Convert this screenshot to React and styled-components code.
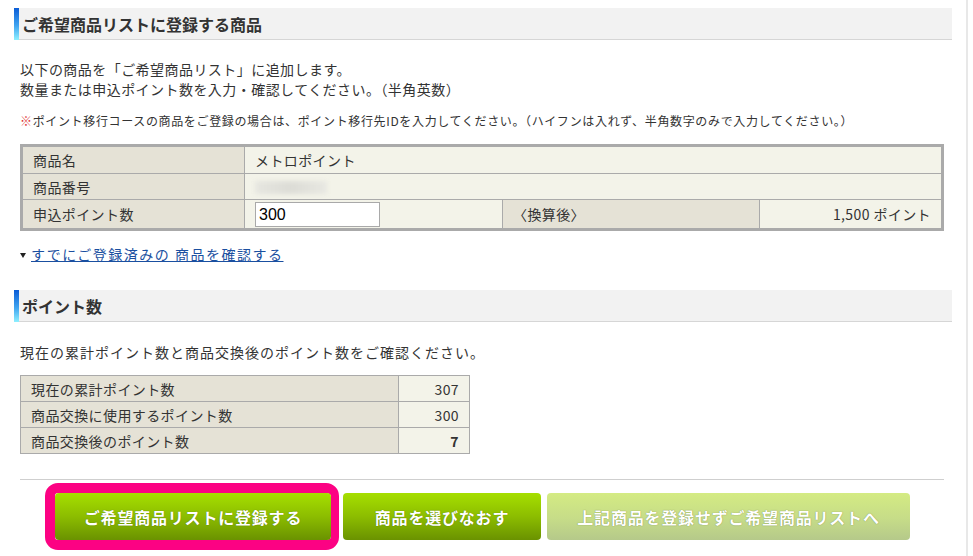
import styled, { createGlobalStyle } from "styled-components";

const GlobalStyle = createGlobalStyle`
  html, body {
    margin: 0;
    padding: 0;
    background: #fff;
  }
  body {
    font-family: "Noto Sans CJK JP", "Noto Sans", sans-serif;
    color: #333;
    font-size: 14px;
  }
`;

const Page = styled.div`
  width: 952px;
  min-height: 556px;
  padding: 8px 0 0 14px;
  box-sizing: content-box;
  border-right: 2px solid #e8e8e8;
  overflow: hidden;
`;

const SectionHeader = styled.h2`
  margin: 0;
  width: 938px;
  height: 32px;
  display: flex;
  align-items: center;
  background: #f2f2f2;
  border-bottom: 1px solid #d6d6d6;
  font-size: 16px;
  font-weight: bold;
  color: #333;
  position: relative;
  padding-left: 8px;
  box-sizing: border-box;

  &::before {
    content: "";
    position: absolute;
    left: 0;
    top: 0;
    width: 5px;
    height: 32px;
    background: linear-gradient(to bottom, #0a5cd6 0%, #3fa4f0 55%, #8ff0ff 100%);
  }
`;

const Content = styled.div`
  margin-left: 6px;
  width: 924px;
`;

const Intro = styled.p`
  margin: 20px 0 0;
  font-size: 14px;
  line-height: 19.5px;
  letter-spacing: 0.45px;
`;

const Note = styled.p`
  margin: 13px 0 0;
  font-size: 12px;
  line-height: 18px;
  letter-spacing: 0.65px;
  white-space: nowrap;

  span {
    color: #e03a3a;
  }
`;

const ItemGrid = styled.div`
  margin-top: 14px;
  display: grid;
  grid-template-columns: 221px 257px 256px 1fr;
  grid-template-rows: 26px 25px 28px;
  gap: 1px;
  background: #aaa;
  border: 3px solid #aaa;
`;

const Cell = styled.div`
  display: flex;
  align-items: center;
  justify-content: ${({ $right }) => ($right ? "flex-end" : "flex-start")};
  padding: ${({ $right }) => ($right ? "0 10px 0 0" : "0 0 0 10px")};
  background: ${({ $label }) => ($label ? "#e5e2d6" : "#f3f3e9")};
  font-size: 14px;
  letter-spacing: 0.4px;
  font-weight: ${({ $bold }) => ($bold ? "bold" : "normal")};
  grid-column: ${({ $span }) => ($span ? `span ${$span}` : "auto")};
  white-space: nowrap;
  overflow: hidden;
`;

const Blurred = styled.span`
  display: block;
  width: 72px;
  height: 13px;
  margin-top: 1px;
  background: linear-gradient(to right, #e6e6e0, #dcdcd6 50%, #e8e8e2);
  filter: blur(2px);
`;

const PointInput = styled.input`
  width: 125px;
  height: 25px;
  box-sizing: border-box;
  border: 1px solid #a9a9a9;
  padding: 0 3px;
  margin-top: 1px;
  font-family: "Liberation Sans", Arial, sans-serif;
  font-size: 16px;
  color: #000;
  background: #fff;
  outline: none;
`;

const LinkRow = styled.div`
  margin-top: 13px;
  height: 20px;
  display: flex;
  align-items: center;
  font-size: 14px;
`;

const Arrow = styled.span`
  width: 0;
  height: 0;
  margin: 3px 5px 0 0;
  border-left: 3px solid transparent;
  border-right: 3px solid transparent;
  border-top: 5px solid #222;
`;

const TextLink = styled.a`
  color: #1a4fa0;
  text-decoration: underline;
  cursor: pointer;
  line-height: 20px;
  letter-spacing: 1.5px;
`;

const SecondHeader = styled(SectionHeader)`
  margin-top: 26px;
`;

const Lead = styled.p`
  margin: 20px 0 0;
  font-size: 14px;
  line-height: 20px;
  letter-spacing: 1px;
`;

const PointGrid = styled.div`
  margin-top: 13px;
  width: 450px;
  box-sizing: border-box;
  display: grid;
  grid-template-columns: 377px 1fr;
  grid-auto-rows: 25px;
  gap: 1px;
  background: #aaa;
  border: 1px solid #aaa;
`;

const Divider = styled.hr`
  margin: 25px 0 0;
  border: 0;
  border-top: 1px solid #cfcfcf;
  height: 0;
`;

const ButtonRow = styled.div`
  margin-top: 3px;
  padding-left: 25px;
  display: flex;
  align-items: center;
`;

const Highlight = styled.div`
  border: 10px solid #fc0283;
  border-right-width: 8px;
  border-radius: 13px;
  display: flex;
`;

const GreenButton = styled.button`
  height: 47px;
  width: ${({ $w }) => $w}px;
  margin-left: ${({ $ml }) => $ml || 0}px;
  border: 0;
  border-radius: 4px;
  font-family: "Noto Sans CJK JP", sans-serif;
  font-size: 16px;
  font-weight: bold;
  letter-spacing: 0.8px;
  color: #fff;
  text-shadow: 0 0 1px rgba(40, 60, 0, 0.6);
  cursor: pointer;
  background: ${({ $soft }) =>
    $soft
      ? "linear-gradient(to bottom, #d4eb83 0%, #c6dc88 55%, #b5c98a 100%)"
      : "linear-gradient(to bottom, #a6df00 0%, #8cbd00 50%, #6a9200 100%)"};
`;

export default function App() {
  return (
    <>
      <GlobalStyle />
      <Page>
        <SectionHeader>ご希望商品リストに登録する商品</SectionHeader>
        <Content>
          <Intro>
            以下の商品を「ご希望商品リスト」に追加します。
            <br />
            数量または申込ポイント数を入力・確認してください。（半角英数）
          </Intro>
          <Note>
            <span>※</span>
            ポイント移行コースの商品をご登録の場合は、ポイント移行先IDを入力してください。（ハイフンは入れず、半角数字のみで入力してください。）
          </Note>

          <ItemGrid>
            <Cell $label>商品名</Cell>
            <Cell $span={3}>メトロポイント</Cell>
            <Cell $label>商品番号</Cell>
            <Cell $span={3}>
              <Blurred />
            </Cell>
            <Cell $label>申込ポイント数</Cell>
            <Cell>
              <PointInput defaultValue="300" />
            </Cell>
            <Cell $label>〈換算後〉</Cell>
            <Cell $right>1,500 ポイント</Cell>
          </ItemGrid>

          <LinkRow>
            <Arrow />
            <TextLink>すでにご登録済みの 商品を確認する</TextLink>
          </LinkRow>
        </Content>

        <SecondHeader>ポイント数</SecondHeader>
        <Content>
          <Lead>現在の累計ポイント数と商品交換後のポイント数をご確認ください。</Lead>
          <PointGrid>
            <Cell $label>現在の累計ポイント数</Cell>
            <Cell $right>307</Cell>
            <Cell $label>商品交換に使用するポイント数</Cell>
            <Cell $right>300</Cell>
            <Cell $label>商品交換後のポイント数</Cell>
            <Cell $right $bold>7</Cell>
          </PointGrid>

          <Divider />

          <ButtonRow>
            <Highlight>
              <GreenButton $w={276}>ご希望商品リストに登録する</GreenButton>
            </Highlight>
            <GreenButton $w={198} $ml={4}>商品を選びなおす</GreenButton>
            <GreenButton $w={363} $ml={6} $soft>
              上記商品を登録せずご希望商品リストへ
            </GreenButton>
          </ButtonRow>
        </Content>
      </Page>
    </>
  );
}
